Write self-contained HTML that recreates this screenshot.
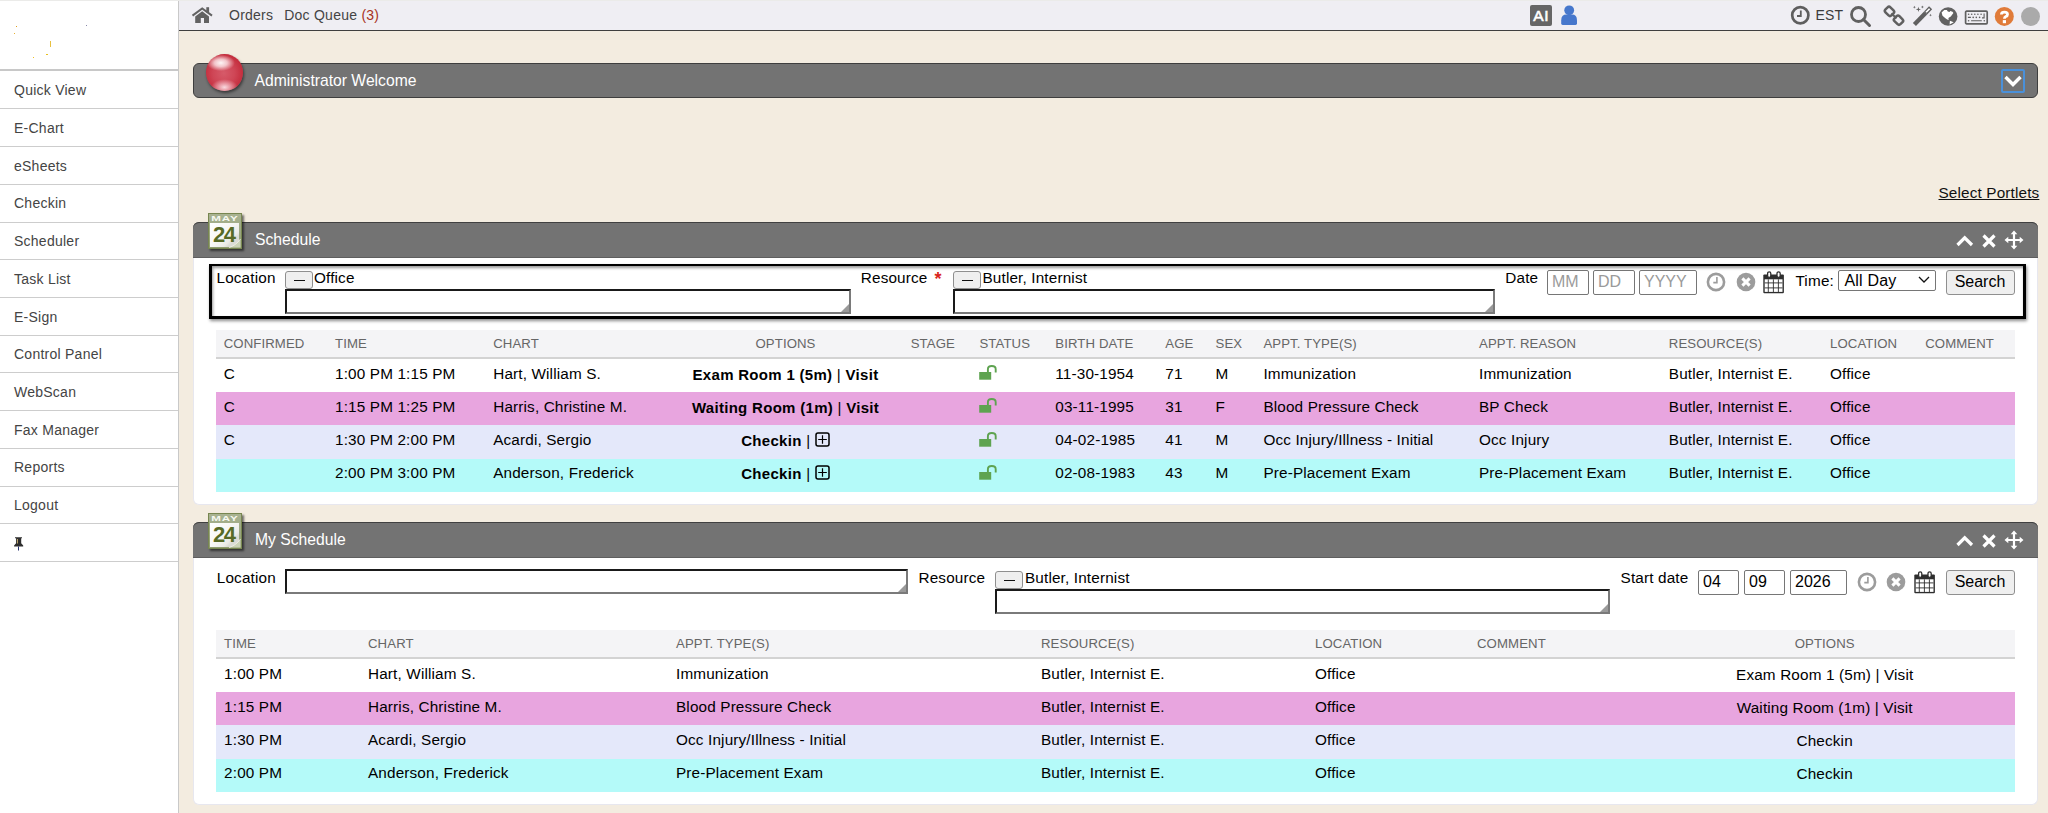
<!DOCTYPE html>
<html><head><meta charset="utf-8"><style>
html,body{margin:0;padding:0;}
body{width:2048px;height:813px;overflow:hidden;position:relative;font-family:"Liberation Sans", sans-serif;background:#f3ece0;}
.a{position:absolute;box-sizing:content-box;}
.t{position:absolute;white-space:nowrap;}
svg.a{overflow:visible;}
</style></head><body>
<div class="a" style="left:0px;top:0px;width:178px;height:813px;background:#fff;"></div>
<div class="a" style="left:178px;top:0px;width:1px;height:813px;background:#c9c9c9;"></div>
<div class="a" style="left:0px;top:69px;width:178px;height:2px;background:#c8c8c8;"></div>
<div class="a" style="left:0px;top:108px;width:178px;height:1px;background:#cdcdcd;"></div>
<div class="t" style="top:81.15px;font-size:14px;line-height:18px;color:#444;letter-spacing:0.25px;left:14px;">Quick View</div>
<div class="a" style="left:0px;top:146px;width:178px;height:1px;background:#cdcdcd;"></div>
<div class="t" style="top:118.95px;font-size:14px;line-height:18px;color:#444;letter-spacing:0.25px;left:14px;">E-Chart</div>
<div class="a" style="left:0px;top:184px;width:178px;height:1px;background:#cdcdcd;"></div>
<div class="t" style="top:156.67px;font-size:14px;line-height:18px;color:#444;letter-spacing:0.25px;left:14px;">eSheets</div>
<div class="a" style="left:0px;top:222px;width:178px;height:1px;background:#cdcdcd;"></div>
<div class="t" style="top:194.39px;font-size:14px;line-height:18px;color:#444;letter-spacing:0.25px;left:14px;">Checkin</div>
<div class="a" style="left:0px;top:259px;width:178px;height:1px;background:#cdcdcd;"></div>
<div class="t" style="top:232.11px;font-size:14px;line-height:18px;color:#444;letter-spacing:0.25px;left:14px;">Scheduler</div>
<div class="a" style="left:0px;top:297px;width:178px;height:1px;background:#cdcdcd;"></div>
<div class="t" style="top:269.83px;font-size:14px;line-height:18px;color:#444;letter-spacing:0.25px;left:14px;">Task List</div>
<div class="a" style="left:0px;top:335px;width:178px;height:1px;background:#cdcdcd;"></div>
<div class="t" style="top:307.55px;font-size:14px;line-height:18px;color:#444;letter-spacing:0.25px;left:14px;">E-Sign</div>
<div class="a" style="left:0px;top:372px;width:178px;height:1px;background:#cdcdcd;"></div>
<div class="t" style="top:345.27px;font-size:14px;line-height:18px;color:#444;letter-spacing:0.25px;left:14px;">Control Panel</div>
<div class="a" style="left:0px;top:410px;width:178px;height:1px;background:#cdcdcd;"></div>
<div class="t" style="top:382.99px;font-size:14px;line-height:18px;color:#444;letter-spacing:0.25px;left:14px;">WebScan</div>
<div class="a" style="left:0px;top:448px;width:178px;height:1px;background:#cdcdcd;"></div>
<div class="t" style="top:420.71px;font-size:14px;line-height:18px;color:#444;letter-spacing:0.25px;left:14px;">Fax Manager</div>
<div class="a" style="left:0px;top:486px;width:178px;height:1px;background:#cdcdcd;"></div>
<div class="t" style="top:458.43px;font-size:14px;line-height:18px;color:#444;letter-spacing:0.25px;left:14px;">Reports</div>
<div class="a" style="left:0px;top:523px;width:178px;height:1px;background:#cdcdcd;"></div>
<div class="t" style="top:496.15px;font-size:14px;line-height:18px;color:#444;letter-spacing:0.25px;left:14px;">Logout</div>
<div class="a" style="left:0px;top:561px;width:178px;height:1px;background:#cdcdcd;"></div>
<svg class="a" style="left:13px;top:537px" width="11" height="14" viewBox="0 0 11 14"><path d="M2 0.2h7v1h-0.8v5l2 2.2v1.2H1.1V8.4l2-2.2v-5H2z" fill="#2e2e2e"/><path d="M4.5 2v4.5" stroke="#c8b070" stroke-width="0.9"/><path d="M5.5 9.5v4" stroke="#283470" stroke-width="1"/></svg>
<div class="a" style="left:15.5px;top:25.5px;width:1.5px;height:1.5px;background:#e0a020;"></div>
<div class="a" style="left:13.8px;top:32.5px;width:1px;height:1px;background:#e8b030;"></div>
<div class="a" style="left:50px;top:41px;width:1px;height:6px;background:#e8c040;"></div>
<div class="a" style="left:46px;top:53.5px;width:1.5px;height:1.5px;background:#e8c020;"></div>
<div class="a" style="left:33px;top:56.5px;width:1px;height:1.2px;background:#f0c020;"></div>
<div class="a" style="left:86px;top:25px;width:1px;height:1px;background:#8888aa;"></div>
<div class="a" style="left:179px;top:0px;width:1869px;height:30px;background:#efeef3;"></div>
<div class="a" style="left:179px;top:30px;width:1869px;height:1px;background:#3f3f3f;"></div>
<svg class="a" style="left:191px;top:6px" width="23" height="18" viewBox="0 0 23 18"><path d="M1.5 9.6 L11.2 2.4 L21 9.6" stroke="#626262" stroke-width="2" fill="none"/><path d="M15.3 1.2h2.8v5.5h-2.8z" fill="#626262"/><path d="M4.2 10.4 L11.2 5.2 L18 10.4 V17 H13 V12 H9.8 V17 H4.2z" fill="#626262"/></svg>
<div class="t" style="top:6.45px;font-size:14px;line-height:18px;color:#444;letter-spacing:0.25px;left:229px;">Orders</div>
<div class="t" style="top:6.45px;font-size:14px;line-height:18px;color:#444;letter-spacing:0.25px;left:284.2px;">Doc Queue <span style="color:#a8321e">(3)</span></div>
<div class="a" style="left:1530px;top:5px;width:22px;height:21px;background:#666;border-radius:2px;"></div>
<div class="t" style="top:6.33px;font-size:15.5px;line-height:20px;color:#fff;letter-spacing:0.5px;left:1041.2px;width:1000px;text-align:center;-webkit-text-stroke:0.6px #fff;">AI</div>
<svg class="a" style="left:1560px;top:5px" width="18" height="21" viewBox="0 0 18 21"><circle cx="9.2" cy="5.3" r="4.9" fill="#4677cc"/><path d="M1.2 18.6 V15.2 Q1.2 9.6 6.4 9.6 H12 Q17 9.6 17 15.2 V18.6 Q17 20 15.6 20 H2.6 Q1.2 20 1.2 18.6z" fill="#4677cc"/></svg>
<svg class="a" style="left:1790px;top:5px" width="21" height="21" viewBox="0 0 21 21"><circle cx="10.3" cy="10.3" r="8.1" stroke="#5e5e5e" stroke-width="2.7" fill="none"/><path d="M10.8 5.4 V11 H7" stroke="#5e5e5e" stroke-width="1.8" fill="none"/></svg>
<div class="t" style="top:6.05px;font-size:14px;line-height:18px;color:#3c3c3c;letter-spacing:0.2px;left:1815.5px;">EST</div>
<svg class="a" style="left:1849px;top:5px" width="23" height="22" viewBox="0 0 23 22"><circle cx="9.5" cy="9.5" r="7" stroke="#606060" stroke-width="2.8" fill="none"/><path d="M14.5 14.5 L20.5 20.5" stroke="#606060" stroke-width="3" stroke-linecap="round"/></svg>
<svg class="a" style="left:1880px;top:0px" width="28" height="30" viewBox="0 0 28 30"><rect x="6" y="7.2" width="7" height="8.4" rx="2" transform="rotate(-45 9.5 11.4)" stroke="#606060" stroke-width="2.5" fill="none"/><rect x="15" y="16" width="7" height="8.4" rx="2" transform="rotate(-45 18.5 20.2)" stroke="#606060" stroke-width="2.5" fill="none"/><path d="M11.3 13.5 L16.6 18.3" stroke="#606060" stroke-width="2"/></svg>
<svg class="a" style="left:1910px;top:0px" width="26" height="30" viewBox="0 0 26 30"><path d="M4.4 24.6 L15.6 13" stroke="#606060" stroke-width="4.3"/><path d="M15.6 13 L20.6 7.8" stroke="#606060" stroke-width="4.3"/><path d="M16.1 12.3 L19.6 8.7" stroke="#fff" stroke-width="1.6"/><path d="M8.4 6.800000000000001 L9.0 8.8 L11.0 9.4 L9.0 10.0 L8.4 12.0 L7.800000000000001 10.0 L5.800000000000001 9.4 L7.800000000000001 8.8z M4.4 5.7 L4.800000000000001 6.8 L5.9 7.2 L4.800000000000001 7.6000000000000005 L4.4 8.7 L4.0 7.6000000000000005 L2.9000000000000004 7.2 L4.0 6.8z M12.4 5.5 L12.8 6.6 L13.9 7 L12.8 7.4 L12.4 8.5 L12.0 7.4 L10.9 7 L12.0 6.6z M20.5 13.799999999999999 L20.9 14.799999999999999 L21.9 15.2 L20.9 15.6 L20.5 16.599999999999998 L20.1 15.6 L19.1 15.2 L20.1 14.799999999999999z" fill="#606060"/></svg>
<svg class="a" style="left:1938px;top:6px" width="21" height="21" viewBox="0 0 21 21"><circle cx="10.1" cy="10.5" r="9.3" fill="#626262"/><path d="M3.6 6.6 L6.3 3.9 L8.9 3.9 L9.8 5.4 L11.6 6 L12.2 5.1 L14.5 5.7 L15.4 6.9 L12.8 10.4 L10.4 11.9 L10.7 13.9 L9.2 13.6 L7.4 12.2 L4.5 9.8z M11.9 14.8 L15.7 16.3 L11.6 18.4z" fill="#fff"/></svg>
<svg class="a" style="left:1964px;top:10px" width="25" height="16" viewBox="0 0 25 16"><rect x="1.6" y="1.2" width="21.6" height="12.6" rx="1" stroke="#606060" stroke-width="1.7" fill="none"/><g fill="#606060"><circle cx="4.6" cy="4.3" r="0.8"/><circle cx="7.7" cy="4.3" r="0.8"/><circle cx="10.8" cy="4.3" r="0.8"/><circle cx="13.9" cy="4.3" r="0.8"/><circle cx="17.1" cy="4.3" r="0.8"/><circle cx="9.2" cy="7.4" r="0.8"/><circle cx="12.3" cy="7.4" r="0.8"/><circle cx="15.6" cy="7.4" r="0.8"/><circle cx="4.6" cy="10.7" r="0.8"/><circle cx="20.3" cy="10.7" r="0.8"/></g><path d="M3.9 7.4 H6.9 M7.1 10.7 H17.8 M20.1 3.5 V7.9 H18" stroke="#606060" stroke-width="1.1" fill="none"/></svg>
<svg class="a" style="left:1994px;top:6px" width="21" height="21" viewBox="0 0 21 21"><circle cx="10.3" cy="10.4" r="9.5" fill="#e07b39"/><path d="M7.4 8.4 Q7.4 6.2 10.4 6.2 Q13.5 6.2 13.5 8.4 Q13.5 9.8 11.8 10.6 Q10.4 11.3 10.4 12.8" stroke="#fff" stroke-width="2.8" fill="none"/><rect x="8.8" y="14.1" width="3.2" height="3.1" fill="#fff"/></svg>
<div class="a" style="left:2021px;top:7px;width:19px;height:19px;background:#aaa;border-radius:50%;"></div>
<div class="a" style="left:179px;top:31px;width:1869px;height:782px;background:#f3ece0;"></div>
<div class="a" style="left:193px;top:63px;width:1843px;height:33.4px;background:#737373;border:1px solid #3e3e3e;border-radius:6px;"></div>
<div class="a" style="left:206px;top:54px;width:36.5px;height:36.5px;border-radius:50%;background:radial-gradient(ellipse 38% 22% at 40% 24%, rgba(255,255,255,.95) 0%, rgba(255,240,242,.75) 45%, rgba(255,255,255,0) 100%), radial-gradient(ellipse 36% 22% at 50% 90%, rgba(255,235,240,.9) 0%, rgba(255,220,228,.5) 50%, rgba(255,255,255,0) 100%), radial-gradient(circle at 48% 52%, #d65a69 0%, #cf4656 40%, #c52f3f 68%, #b01f2c 88%, #8c1620 100%);box-shadow:1px 2px 3px rgba(0,0,0,.5);"></div>
<div class="t" style="top:70.56px;font-size:15.7px;line-height:20px;color:#fff;left:254.6px;">Administrator Welcome</div>
<div class="a" style="left:2001px;top:69px;width:20px;height:20px;border:2px solid #4a90d9;border-radius:2px;"></div>
<svg class="a" style="left:2003px;top:74px" width="20" height="16" viewBox="0 0 20 16"><path d="M2.5 3 L10 10.5 L17.5 3" stroke="#fff" stroke-width="3.4" fill="none"/></svg>
<div class="t" style="top:182.50px;font-size:15.3px;line-height:20px;color:#111;letter-spacing:0.15px;left:1938.5px;"><u>Select Portlets</u></div>
<div class="a" style="left:193px;top:258px;width:1843px;height:245.6px;background:#fff;border:1px solid #e7e7ef;border-top:0;border-radius:0 0 6px 6px;"></div>
<div class="a" style="left:193px;top:222px;width:1845px;height:36px;background:#737373;border-radius:6px 6px 0 0;box-shadow:inset 0 1px 0 #404040, inset 0 -1px 0 #5e5e5e;"></div>
<div class="a" style="left:207.5px;top:213px;width:32px;height:33.5px;background:linear-gradient(#a9b392,#8f9c70);border:1.2px solid #778650;box-shadow:2px 2px 2px rgba(0,0,0,.55);">
<div class="a" style="left:1.6px;top:8.6px;width:29px;height:24px;background:linear-gradient(135deg,#ffffff 0%,#f7f7f5 45%,#ecece8 70%,#dcdcd6 78%);"></div>
<svg class="a" style="left:19px;top:24.5px" width="12.5" height="8.5" viewBox="0 0 12.5 8.5"><path d="M12.5 0 L12.5 8.5 L1 8.5 Q8 6.5 12.5 0z" fill="#ccd3b8"/><path d="M12.5 0 Q8 6.5 1 8.5" stroke="#eef0e6" stroke-width="0.9" fill="none"/></svg>
<div class="a" style="left:0;top:0.6px;width:32px;text-align:center;font-size:8px;line-height:8px;color:#f6f8f0;font-weight:700;letter-spacing:0.6px;transform:scaleX(1.45);">MAY</div>
<div class="a" style="left:0;top:8.8px;width:32px;text-align:center;font-size:22px;line-height:24px;color:#586a26;font-weight:700;letter-spacing:-1.4px;text-indent:-1.4px;">24</div>
</div>
<div class="t" style="top:229.76px;font-size:15.7px;line-height:20px;color:#fff;left:255px;">Schedule</div>
<svg class="a" style="left:1955px;top:234px" width="20" height="14" viewBox="0 0 20 14"><path d="M2.5 11 L9.7 3.8 L17 11" stroke="#fff" stroke-width="3.2" fill="none"/></svg>
<svg class="a" style="left:1981px;top:233px" width="16" height="16" viewBox="0 0 16 16"><path d="M2.5 2.5 L13.5 13.5 M13.5 2.5 L2.5 13.5" stroke="#fff" stroke-width="3.2"/></svg>
<svg class="a" style="left:2004px;top:230px" width="20" height="20" viewBox="0 0 20 20"><path d="M10 2.5 V17.5 M2.5 10 H17.5" stroke="#fff" stroke-width="2.2"/><path d="M10 0.5 L13.3 4.3 H6.7z M10 19.5 L13.3 15.7 H6.7z M0.5 10 L4.3 6.7 V13.3z M19.5 10 L15.7 6.7 V13.3z" fill="#fff"/></svg>
<div class="a" style="left:209px;top:263.6px;width:1811px;height:50.4px;border:3px solid #000;border-top-width:2.6px;box-shadow:1px 2px 3px rgba(0,0,0,.45), inset 1px 2px 3px rgba(0,0,0,.4);"></div>
<div class="t" style="top:268.00px;font-size:15.3px;line-height:20px;color:#000;letter-spacing:0.15px;left:216.5px;">Location</div>
<div class="a" style="left:285px;top:271px;width:26.4px;height:15.8px;background:#efefef;border:1px solid #8f8f8f;border-radius:3px;"></div>
<div class="a" style="left:293.6px;top:279.8px;width:11px;height:1.2px;background:#111;"></div>
<div class="t" style="top:268.00px;font-size:15.3px;line-height:20px;color:#000;letter-spacing:0.15px;left:314px;">Office</div>
<div class="a" style="left:285px;top:289px;width:562px;height:21px;background:#fff;border-style:solid;border-width:2px;border-color:#1a1a1a #7a7a7a #7a7a7a #1a1a1a;"></div>
<svg class="a" style="left:841px;top:304px" width="8" height="8" viewBox="0 0 8 8"><path d="M8 0 V8 H0z" fill="#9a9a9a"/></svg>
<div class="t" style="top:268.00px;font-size:15.3px;line-height:20px;color:#000;letter-spacing:0.15px;left:860.8px;">Resource</div>
<div class="t" style="top:267.76px;font-size:18px;line-height:23px;color:#d9261c;font-weight:700;left:934.5px;">*</div>
<div class="a" style="left:953px;top:271px;width:26.4px;height:15.8px;background:#efefef;border:1px solid #8f8f8f;border-radius:3px;"></div>
<div class="a" style="left:961.6px;top:279.8px;width:11px;height:1.2px;background:#111;"></div>
<div class="t" style="top:268.00px;font-size:15.3px;line-height:20px;color:#000;letter-spacing:0.15px;left:982.5px;">Butler, Internist</div>
<div class="a" style="left:953px;top:289px;width:538px;height:21px;background:#fff;border-style:solid;border-width:2px;border-color:#1a1a1a #7a7a7a #7a7a7a #1a1a1a;"></div>
<svg class="a" style="left:1485px;top:304px" width="8" height="8" viewBox="0 0 8 8"><path d="M8 0 V8 H0z" fill="#9a9a9a"/></svg>
<div class="t" style="top:268.00px;font-size:15.3px;line-height:20px;color:#000;letter-spacing:0.15px;left:1505.3px;">Date</div>
<div class="a" style="left:1547px;top:270px;width:40px;height:23px;background:#fff;border:1px solid #767676;border-radius:2px;"></div>
<div class="t" style="top:271.45px;font-size:16px;line-height:21px;color:#9a9a9a;left:1552px;">MM</div>
<div class="a" style="left:1593px;top:270px;width:40px;height:23px;background:#fff;border:1px solid #767676;border-radius:2px;"></div>
<div class="t" style="top:271.45px;font-size:16px;line-height:21px;color:#9a9a9a;left:1598px;">DD</div>
<div class="a" style="left:1639px;top:270px;width:56px;height:23px;background:#fff;border:1px solid #767676;border-radius:2px;"></div>
<div class="t" style="top:271.45px;font-size:16px;line-height:21px;color:#9a9a9a;left:1644px;">YYYY</div>
<svg class="a" style="left:1706px;top:272px" width="20" height="20" viewBox="0 0 20 20"><circle cx="10" cy="10" r="8.1" stroke="#9c9c9c" stroke-width="2.6" fill="none"/><path d="M10.9 5 V10.6 H7.3" stroke="#9c9c9c" stroke-width="1.6" fill="none"/></svg>
<svg class="a" style="left:1735.5px;top:272px" width="20" height="20" viewBox="0 0 20 20"><circle cx="10" cy="10" r="9.3" fill="#9c9c9c"/><path d="M6.4 6.4 L13.6 13.6 M13.6 6.4 L6.4 13.6" stroke="#fff" stroke-width="3"/></svg>
<svg class="a" style="left:1763px;top:270.5px" width="22" height="23" viewBox="0 0 22 23"><rect x="0.3" y="3.5" width="20.6" height="18.8" rx="1" fill="#2e2e2e"/><rect x="1.7" y="8.3" width="17.8" height="12.6" fill="#fff"/><path d="M5.3 8.3 V21 M10.4 8.3 V21 M15.4 8.3 V21 M1.7 11.9 H19.5 M1.7 16.9 H19.5" stroke="#2e2e2e" stroke-width="0.9"/><rect x="4.6" y="0.8" width="3.2" height="5.6" rx="1.6" stroke="#2e2e2e" stroke-width="1.3" fill="#fff"/><rect x="14" y="0.8" width="3.2" height="5.6" rx="1.6" stroke="#2e2e2e" stroke-width="1.3" fill="#fff"/></svg>
<div class="t" style="top:270.90px;font-size:15.3px;line-height:20px;color:#000;letter-spacing:0.2px;left:1795.4px;">Time:</div>
<div class="a" style="left:1838px;top:270px;width:96px;height:19px;background:#fff;border:1px solid #767676;border-radius:2px;"></div>
<div class="t" style="top:270.45px;font-size:16px;line-height:21px;color:#000;letter-spacing:0.2px;left:1844.4px;">All Day</div>
<svg class="a" style="left:1918px;top:275px" width="12" height="9" viewBox="0 0 12 9"><path d="M1 2 L6 7 L11 2" stroke="#111" stroke-width="1.3" fill="none"/></svg>
<div class="a" style="left:1946px;top:270px;width:67px;height:23px;background:#efefef;border:1px solid #8f8f8f;border-radius:3px;"></div>
<div class="t" style="top:271.35px;font-size:16px;line-height:21px;color:#000;left:1480px;width:1000px;text-align:center;">Search</div>
<div class="a" style="left:216px;top:330px;width:1799px;height:27px;background:#f4f4f6;"></div>
<div class="a" style="left:216px;top:357px;width:1799px;height:2px;background:#d3d3d3;"></div>
<div class="t" style="top:334.92px;font-size:13.2px;line-height:17px;color:#666;letter-spacing:0.1px;left:223.7px;">CONFIRMED</div>
<div class="t" style="top:334.92px;font-size:13.2px;line-height:17px;color:#666;letter-spacing:0.1px;left:335px;">TIME</div>
<div class="t" style="top:334.92px;font-size:13.2px;line-height:17px;color:#666;letter-spacing:0.1px;left:493.2px;">CHART</div>
<div class="t" style="top:334.92px;font-size:13.2px;line-height:17px;color:#666;letter-spacing:0.1px;left:285.5px;width:1000px;text-align:center;">OPTIONS</div>
<div class="t" style="top:334.92px;font-size:13.2px;line-height:17px;color:#666;letter-spacing:0.1px;left:910.7px;">STAGE</div>
<div class="t" style="top:334.92px;font-size:13.2px;line-height:17px;color:#666;letter-spacing:0.1px;left:979.4px;">STATUS</div>
<div class="t" style="top:334.92px;font-size:13.2px;line-height:17px;color:#666;letter-spacing:0.1px;left:1055.3px;">BIRTH DATE</div>
<div class="t" style="top:334.92px;font-size:13.2px;line-height:17px;color:#666;letter-spacing:0.1px;left:1165.3px;">AGE</div>
<div class="t" style="top:334.92px;font-size:13.2px;line-height:17px;color:#666;letter-spacing:0.1px;left:1215.5px;">SEX</div>
<div class="t" style="top:334.92px;font-size:13.2px;line-height:17px;color:#666;letter-spacing:0.1px;left:1263.4px;">APPT. TYPE(S)</div>
<div class="t" style="top:334.92px;font-size:13.2px;line-height:17px;color:#666;letter-spacing:0.1px;left:1479px;">APPT. REASON</div>
<div class="t" style="top:334.92px;font-size:13.2px;line-height:17px;color:#666;letter-spacing:0.1px;left:1668.8px;">RESOURCE(S)</div>
<div class="t" style="top:334.92px;font-size:13.2px;line-height:17px;color:#666;letter-spacing:0.1px;left:1830px;">LOCATION</div>
<div class="t" style="top:334.92px;font-size:13.2px;line-height:17px;color:#666;letter-spacing:0.1px;left:1925.2px;">COMMENT</div>
<div class="a" style="left:216px;top:359px;width:1799px;height:33px;background:#fff;"></div>
<div class="a" style="left:216px;top:392px;width:1799px;height:33px;background:#e8a5df;"></div>
<div class="a" style="left:216px;top:425px;width:1799px;height:34px;background:#e4e8fa;"></div>
<div class="a" style="left:216px;top:459px;width:1799px;height:33px;background:#b4faf9;"></div>
<div class="t" style="top:363.70px;font-size:15.3px;line-height:20px;color:#000;letter-spacing:0.15px;left:223.7px;">C</div>
<div class="t" style="top:363.70px;font-size:15.3px;line-height:20px;color:#000;letter-spacing:0.15px;left:335px;">1:00 PM 1:15 PM</div>
<div class="t" style="top:363.70px;font-size:15.3px;line-height:20px;color:#000;letter-spacing:0.15px;left:493.2px;">Hart, William S.</div>
<div class="t" style="top:364.80px;font-size:15px;line-height:20px;color:#000;font-weight:700;letter-spacing:0.3px;left:285.5px;width:1000px;text-align:center;">Exam Room 1 (5m) <span style="font-weight:400">|</span> Visit</div>
<svg class="a" style="left:979.0px;top:364.20px" width="19" height="17" viewBox="0 0 19 17"><rect x="0.2" y="8" width="12" height="7.7" fill="#5ea350"/><path d="M8.9 8.5 V5.2 Q8.9 2 12.8 2 Q16.7 2 16.7 5.2 V8.6" stroke="#5ea350" stroke-width="1.9" fill="none"/></svg>
<div class="t" style="top:363.70px;font-size:15.3px;line-height:20px;color:#000;letter-spacing:0.15px;left:1055.3px;">11-30-1954</div>
<div class="t" style="top:363.70px;font-size:15.3px;line-height:20px;color:#000;letter-spacing:0.15px;left:1165.3px;">71</div>
<div class="t" style="top:363.70px;font-size:15.3px;line-height:20px;color:#000;letter-spacing:0.15px;left:1215.5px;">M</div>
<div class="t" style="top:363.70px;font-size:15.3px;line-height:20px;color:#000;letter-spacing:0.15px;left:1263.4px;">Immunization</div>
<div class="t" style="top:363.70px;font-size:15.3px;line-height:20px;color:#000;letter-spacing:0.15px;left:1479px;">Immunization</div>
<div class="t" style="top:363.70px;font-size:15.3px;line-height:20px;color:#000;letter-spacing:0.15px;left:1668.8px;">Butler, Internist E.</div>
<div class="t" style="top:363.70px;font-size:15.3px;line-height:20px;color:#000;letter-spacing:0.15px;left:1830px;">Office</div>
<div class="t" style="top:396.90px;font-size:15.3px;line-height:20px;color:#000;letter-spacing:0.15px;left:223.7px;">C</div>
<div class="t" style="top:396.90px;font-size:15.3px;line-height:20px;color:#000;letter-spacing:0.15px;left:335px;">1:15 PM 1:25 PM</div>
<div class="t" style="top:396.90px;font-size:15.3px;line-height:20px;color:#000;letter-spacing:0.15px;left:493.2px;">Harris, Christine M.</div>
<div class="t" style="top:398.00px;font-size:15px;line-height:20px;color:#000;font-weight:700;letter-spacing:0.3px;left:285.5px;width:1000px;text-align:center;">Waiting Room (1m) <span style="font-weight:400">|</span> Visit</div>
<svg class="a" style="left:979.0px;top:397.40px" width="19" height="17" viewBox="0 0 19 17"><rect x="0.2" y="8" width="12" height="7.7" fill="#5ea350"/><path d="M8.9 8.5 V5.2 Q8.9 2 12.8 2 Q16.7 2 16.7 5.2 V8.6" stroke="#5ea350" stroke-width="1.9" fill="none"/></svg>
<div class="t" style="top:396.90px;font-size:15.3px;line-height:20px;color:#000;letter-spacing:0.15px;left:1055.3px;">03-11-1995</div>
<div class="t" style="top:396.90px;font-size:15.3px;line-height:20px;color:#000;letter-spacing:0.15px;left:1165.3px;">31</div>
<div class="t" style="top:396.90px;font-size:15.3px;line-height:20px;color:#000;letter-spacing:0.15px;left:1215.5px;">F</div>
<div class="t" style="top:396.90px;font-size:15.3px;line-height:20px;color:#000;letter-spacing:0.15px;left:1263.4px;">Blood Pressure Check</div>
<div class="t" style="top:396.90px;font-size:15.3px;line-height:20px;color:#000;letter-spacing:0.15px;left:1479px;">BP Check</div>
<div class="t" style="top:396.90px;font-size:15.3px;line-height:20px;color:#000;letter-spacing:0.15px;left:1668.8px;">Butler, Internist E.</div>
<div class="t" style="top:396.90px;font-size:15.3px;line-height:20px;color:#000;letter-spacing:0.15px;left:1830px;">Office</div>
<div class="t" style="top:430.10px;font-size:15.3px;line-height:20px;color:#000;letter-spacing:0.15px;left:223.7px;">C</div>
<div class="t" style="top:430.10px;font-size:15.3px;line-height:20px;color:#000;letter-spacing:0.15px;left:335px;">1:30 PM 2:00 PM</div>
<div class="t" style="top:430.10px;font-size:15.3px;line-height:20px;color:#000;letter-spacing:0.15px;left:493.2px;">Acardi, Sergio</div>
<div class="t" style="top:431.20px;font-size:15px;line-height:20px;color:#000;font-weight:700;letter-spacing:0.3px;left:285.5px;width:1000px;text-align:center;">Checkin <span style="font-weight:400">|</span> <svg width="15" height="15" viewBox="0 0 15 15" style="vertical-align:-1px"><rect x="1" y="1" width="13" height="13" rx="2" stroke="#000" stroke-width="1.5" fill="none"/><path d="M7.5 3.2 V11.8 M3.2 7.5 H11.8" stroke="#000" stroke-width="1.2"/></svg></div>
<svg class="a" style="left:979.0px;top:430.60px" width="19" height="17" viewBox="0 0 19 17"><rect x="0.2" y="8" width="12" height="7.7" fill="#5ea350"/><path d="M8.9 8.5 V5.2 Q8.9 2 12.8 2 Q16.7 2 16.7 5.2 V8.6" stroke="#5ea350" stroke-width="1.9" fill="none"/></svg>
<div class="t" style="top:430.10px;font-size:15.3px;line-height:20px;color:#000;letter-spacing:0.15px;left:1055.3px;">04-02-1985</div>
<div class="t" style="top:430.10px;font-size:15.3px;line-height:20px;color:#000;letter-spacing:0.15px;left:1165.3px;">41</div>
<div class="t" style="top:430.10px;font-size:15.3px;line-height:20px;color:#000;letter-spacing:0.15px;left:1215.5px;">M</div>
<div class="t" style="top:430.10px;font-size:15.3px;line-height:20px;color:#000;letter-spacing:0.15px;left:1263.4px;">Occ Injury/Illness - Initial</div>
<div class="t" style="top:430.10px;font-size:15.3px;line-height:20px;color:#000;letter-spacing:0.15px;left:1479px;">Occ Injury</div>
<div class="t" style="top:430.10px;font-size:15.3px;line-height:20px;color:#000;letter-spacing:0.15px;left:1668.8px;">Butler, Internist E.</div>
<div class="t" style="top:430.10px;font-size:15.3px;line-height:20px;color:#000;letter-spacing:0.15px;left:1830px;">Office</div>
<div class="t" style="top:463.30px;font-size:15.3px;line-height:20px;color:#000;letter-spacing:0.15px;left:335px;">2:00 PM 3:00 PM</div>
<div class="t" style="top:463.30px;font-size:15.3px;line-height:20px;color:#000;letter-spacing:0.15px;left:493.2px;">Anderson, Frederick</div>
<div class="t" style="top:464.40px;font-size:15px;line-height:20px;color:#000;font-weight:700;letter-spacing:0.3px;left:285.5px;width:1000px;text-align:center;">Checkin <span style="font-weight:400">|</span> <svg width="15" height="15" viewBox="0 0 15 15" style="vertical-align:-1px"><rect x="1" y="1" width="13" height="13" rx="2" stroke="#000" stroke-width="1.5" fill="none"/><path d="M7.5 3.2 V11.8 M3.2 7.5 H11.8" stroke="#000" stroke-width="1.2"/></svg></div>
<svg class="a" style="left:979.0px;top:463.80px" width="19" height="17" viewBox="0 0 19 17"><rect x="0.2" y="8" width="12" height="7.7" fill="#5ea350"/><path d="M8.9 8.5 V5.2 Q8.9 2 12.8 2 Q16.7 2 16.7 5.2 V8.6" stroke="#5ea350" stroke-width="1.9" fill="none"/></svg>
<div class="t" style="top:463.30px;font-size:15.3px;line-height:20px;color:#000;letter-spacing:0.15px;left:1055.3px;">02-08-1983</div>
<div class="t" style="top:463.30px;font-size:15.3px;line-height:20px;color:#000;letter-spacing:0.15px;left:1165.3px;">43</div>
<div class="t" style="top:463.30px;font-size:15.3px;line-height:20px;color:#000;letter-spacing:0.15px;left:1215.5px;">M</div>
<div class="t" style="top:463.30px;font-size:15.3px;line-height:20px;color:#000;letter-spacing:0.15px;left:1263.4px;">Pre-Placement Exam</div>
<div class="t" style="top:463.30px;font-size:15.3px;line-height:20px;color:#000;letter-spacing:0.15px;left:1479px;">Pre-Placement Exam</div>
<div class="t" style="top:463.30px;font-size:15.3px;line-height:20px;color:#000;letter-spacing:0.15px;left:1668.8px;">Butler, Internist E.</div>
<div class="t" style="top:463.30px;font-size:15.3px;line-height:20px;color:#000;letter-spacing:0.15px;left:1830px;">Office</div>
<div class="a" style="left:193px;top:558px;width:1843px;height:245.8px;background:#fff;border:1px solid #e7e7ef;border-top:0;border-radius:0 0 6px 6px;"></div>
<div class="a" style="left:193px;top:522px;width:1845px;height:36px;background:#737373;border-radius:6px 6px 0 0;box-shadow:inset 0 1px 0 #404040, inset 0 -1px 0 #5e5e5e;"></div>
<div class="a" style="left:207.5px;top:513px;width:32px;height:33.5px;background:linear-gradient(#a9b392,#8f9c70);border:1.2px solid #778650;box-shadow:2px 2px 2px rgba(0,0,0,.55);">
<div class="a" style="left:1.6px;top:8.6px;width:29px;height:24px;background:linear-gradient(135deg,#ffffff 0%,#f7f7f5 45%,#ecece8 70%,#dcdcd6 78%);"></div>
<svg class="a" style="left:19px;top:24.5px" width="12.5" height="8.5" viewBox="0 0 12.5 8.5"><path d="M12.5 0 L12.5 8.5 L1 8.5 Q8 6.5 12.5 0z" fill="#ccd3b8"/><path d="M12.5 0 Q8 6.5 1 8.5" stroke="#eef0e6" stroke-width="0.9" fill="none"/></svg>
<div class="a" style="left:0;top:0.6px;width:32px;text-align:center;font-size:8px;line-height:8px;color:#f6f8f0;font-weight:700;letter-spacing:0.6px;transform:scaleX(1.45);">MAY</div>
<div class="a" style="left:0;top:8.8px;width:32px;text-align:center;font-size:22px;line-height:24px;color:#586a26;font-weight:700;letter-spacing:-1.4px;text-indent:-1.4px;">24</div>
</div>
<div class="t" style="top:529.76px;font-size:15.7px;line-height:20px;color:#fff;left:255px;">My Schedule</div>
<svg class="a" style="left:1955px;top:534px" width="20" height="14" viewBox="0 0 20 14"><path d="M2.5 11 L9.7 3.8 L17 11" stroke="#fff" stroke-width="3.2" fill="none"/></svg>
<svg class="a" style="left:1981px;top:533px" width="16" height="16" viewBox="0 0 16 16"><path d="M2.5 2.5 L13.5 13.5 M13.5 2.5 L2.5 13.5" stroke="#fff" stroke-width="3.2"/></svg>
<svg class="a" style="left:2004px;top:530px" width="20" height="20" viewBox="0 0 20 20"><path d="M10 2.5 V17.5 M2.5 10 H17.5" stroke="#fff" stroke-width="2.2"/><path d="M10 0.5 L13.3 4.3 H6.7z M10 19.5 L13.3 15.7 H6.7z M0.5 10 L4.3 6.7 V13.3z M19.5 10 L15.7 6.7 V13.3z" fill="#fff"/></svg>
<div class="t" style="top:568.00px;font-size:15.3px;line-height:20px;color:#000;letter-spacing:0.15px;left:216.8px;">Location</div>
<div class="a" style="left:285px;top:569px;width:619px;height:21px;background:#fff;border-style:solid;border-width:2px;border-color:#1a1a1a #7a7a7a #7a7a7a #1a1a1a;"></div>
<svg class="a" style="left:898px;top:584px" width="8" height="8" viewBox="0 0 8 8"><path d="M8 0 V8 H0z" fill="#9a9a9a"/></svg>
<div class="t" style="top:568.00px;font-size:15.3px;line-height:20px;color:#000;letter-spacing:0.15px;left:918.5px;">Resource</div>
<div class="a" style="left:995px;top:571px;width:26.4px;height:15.8px;background:#efefef;border:1px solid #8f8f8f;border-radius:3px;"></div>
<div class="a" style="left:1003.6px;top:579.8px;width:11px;height:1.2px;background:#111;"></div>
<div class="t" style="top:568.00px;font-size:15.3px;line-height:20px;color:#000;letter-spacing:0.15px;left:1025px;">Butler, Internist</div>
<div class="a" style="left:995px;top:589px;width:611px;height:21px;background:#fff;border-style:solid;border-width:2px;border-color:#1a1a1a #7a7a7a #7a7a7a #1a1a1a;"></div>
<svg class="a" style="left:1600px;top:604px" width="8" height="8" viewBox="0 0 8 8"><path d="M8 0 V8 H0z" fill="#9a9a9a"/></svg>
<div class="t" style="top:567.80px;font-size:15.3px;line-height:20px;color:#000;letter-spacing:0.15px;left:1620.6px;">Start date</div>
<div class="a" style="left:1698px;top:570px;width:39px;height:23px;background:#fff;border:1px solid #767676;border-radius:2px;"></div>
<div class="t" style="top:571.45px;font-size:16px;line-height:21px;color:#000;left:1703px;">04</div>
<div class="a" style="left:1744px;top:570px;width:39px;height:23px;background:#fff;border:1px solid #767676;border-radius:2px;"></div>
<div class="t" style="top:571.45px;font-size:16px;line-height:21px;color:#000;left:1749px;">09</div>
<div class="a" style="left:1790px;top:570px;width:55px;height:23px;background:#fff;border:1px solid #767676;border-radius:2px;"></div>
<div class="t" style="top:571.45px;font-size:16px;line-height:21px;color:#000;left:1795px;">2026</div>
<svg class="a" style="left:1857px;top:572px" width="20" height="20" viewBox="0 0 20 20"><circle cx="10" cy="10" r="8.1" stroke="#9c9c9c" stroke-width="2.6" fill="none"/><path d="M10.9 5 V10.6 H7.3" stroke="#9c9c9c" stroke-width="1.6" fill="none"/></svg>
<svg class="a" style="left:1885.5px;top:572px" width="20" height="20" viewBox="0 0 20 20"><circle cx="10" cy="10" r="9.3" fill="#9c9c9c"/><path d="M6.4 6.4 L13.6 13.6 M13.6 6.4 L6.4 13.6" stroke="#fff" stroke-width="3"/></svg>
<svg class="a" style="left:1913.5px;top:570.5px" width="22" height="23" viewBox="0 0 22 23"><rect x="0.3" y="3.5" width="20.6" height="18.8" rx="1" fill="#2e2e2e"/><rect x="1.7" y="8.3" width="17.8" height="12.6" fill="#fff"/><path d="M5.3 8.3 V21 M10.4 8.3 V21 M15.4 8.3 V21 M1.7 11.9 H19.5 M1.7 16.9 H19.5" stroke="#2e2e2e" stroke-width="0.9"/><rect x="4.6" y="0.8" width="3.2" height="5.6" rx="1.6" stroke="#2e2e2e" stroke-width="1.3" fill="#fff"/><rect x="14" y="0.8" width="3.2" height="5.6" rx="1.6" stroke="#2e2e2e" stroke-width="1.3" fill="#fff"/></svg>
<div class="a" style="left:1946px;top:569.5px;width:67px;height:23px;background:#efefef;border:1px solid #8f8f8f;border-radius:3px;"></div>
<div class="t" style="top:570.85px;font-size:16px;line-height:21px;color:#000;left:1480px;width:1000px;text-align:center;">Search</div>
<div class="a" style="left:216px;top:630px;width:1799px;height:27px;background:#f4f4f6;"></div>
<div class="a" style="left:216px;top:657px;width:1799px;height:2px;background:#d3d3d3;"></div>
<div class="t" style="top:634.92px;font-size:13.2px;line-height:17px;color:#666;letter-spacing:0.1px;left:224.1px;">TIME</div>
<div class="t" style="top:634.92px;font-size:13.2px;line-height:17px;color:#666;letter-spacing:0.1px;left:368px;">CHART</div>
<div class="t" style="top:634.92px;font-size:13.2px;line-height:17px;color:#666;letter-spacing:0.1px;left:676px;">APPT. TYPE(S)</div>
<div class="t" style="top:634.92px;font-size:13.2px;line-height:17px;color:#666;letter-spacing:0.1px;left:1041px;">RESOURCE(S)</div>
<div class="t" style="top:634.92px;font-size:13.2px;line-height:17px;color:#666;letter-spacing:0.1px;left:1315px;">LOCATION</div>
<div class="t" style="top:634.92px;font-size:13.2px;line-height:17px;color:#666;letter-spacing:0.1px;left:1477px;">COMMENT</div>
<div class="t" style="top:634.92px;font-size:13.2px;line-height:17px;color:#666;letter-spacing:0.1px;left:1324.7px;width:1000px;text-align:center;">OPTIONS</div>
<div class="a" style="left:216px;top:659px;width:1799px;height:33px;background:#fff;"></div>
<div class="a" style="left:216px;top:692px;width:1799px;height:33px;background:#e8a5df;"></div>
<div class="a" style="left:216px;top:725px;width:1799px;height:34px;background:#e4e8fa;"></div>
<div class="a" style="left:216px;top:759px;width:1799px;height:33px;background:#b4faf9;"></div>
<div class="t" style="top:663.70px;font-size:15.3px;line-height:20px;color:#000;letter-spacing:0.15px;left:224.1px;">1:00 PM</div>
<div class="t" style="top:663.70px;font-size:15.3px;line-height:20px;color:#000;letter-spacing:0.15px;left:368px;">Hart, William S.</div>
<div class="t" style="top:663.70px;font-size:15.3px;line-height:20px;color:#000;letter-spacing:0.15px;left:676px;">Immunization</div>
<div class="t" style="top:663.70px;font-size:15.3px;line-height:20px;color:#000;letter-spacing:0.15px;left:1041px;">Butler, Internist E.</div>
<div class="t" style="top:663.70px;font-size:15.3px;line-height:20px;color:#000;letter-spacing:0.15px;left:1315px;">Office</div>
<div class="t" style="top:664.70px;font-size:15.3px;line-height:20px;color:#000;letter-spacing:0.15px;left:1324.7px;width:1000px;text-align:center;">Exam Room 1 (5m) | Visit</div>
<div class="t" style="top:696.90px;font-size:15.3px;line-height:20px;color:#000;letter-spacing:0.15px;left:224.1px;">1:15 PM</div>
<div class="t" style="top:696.90px;font-size:15.3px;line-height:20px;color:#000;letter-spacing:0.15px;left:368px;">Harris, Christine M.</div>
<div class="t" style="top:696.90px;font-size:15.3px;line-height:20px;color:#000;letter-spacing:0.15px;left:676px;">Blood Pressure Check</div>
<div class="t" style="top:696.90px;font-size:15.3px;line-height:20px;color:#000;letter-spacing:0.15px;left:1041px;">Butler, Internist E.</div>
<div class="t" style="top:696.90px;font-size:15.3px;line-height:20px;color:#000;letter-spacing:0.15px;left:1315px;">Office</div>
<div class="t" style="top:697.90px;font-size:15.3px;line-height:20px;color:#000;letter-spacing:0.15px;left:1324.7px;width:1000px;text-align:center;">Waiting Room (1m) | Visit</div>
<div class="t" style="top:730.10px;font-size:15.3px;line-height:20px;color:#000;letter-spacing:0.15px;left:224.1px;">1:30 PM</div>
<div class="t" style="top:730.10px;font-size:15.3px;line-height:20px;color:#000;letter-spacing:0.15px;left:368px;">Acardi, Sergio</div>
<div class="t" style="top:730.10px;font-size:15.3px;line-height:20px;color:#000;letter-spacing:0.15px;left:676px;">Occ Injury/Illness - Initial</div>
<div class="t" style="top:730.10px;font-size:15.3px;line-height:20px;color:#000;letter-spacing:0.15px;left:1041px;">Butler, Internist E.</div>
<div class="t" style="top:730.10px;font-size:15.3px;line-height:20px;color:#000;letter-spacing:0.15px;left:1315px;">Office</div>
<div class="t" style="top:731.10px;font-size:15.3px;line-height:20px;color:#000;letter-spacing:0.15px;left:1324.7px;width:1000px;text-align:center;">Checkin</div>
<div class="t" style="top:763.30px;font-size:15.3px;line-height:20px;color:#000;letter-spacing:0.15px;left:224.1px;">2:00 PM</div>
<div class="t" style="top:763.30px;font-size:15.3px;line-height:20px;color:#000;letter-spacing:0.15px;left:368px;">Anderson, Frederick</div>
<div class="t" style="top:763.30px;font-size:15.3px;line-height:20px;color:#000;letter-spacing:0.15px;left:676px;">Pre-Placement Exam</div>
<div class="t" style="top:763.30px;font-size:15.3px;line-height:20px;color:#000;letter-spacing:0.15px;left:1041px;">Butler, Internist E.</div>
<div class="t" style="top:763.30px;font-size:15.3px;line-height:20px;color:#000;letter-spacing:0.15px;left:1315px;">Office</div>
<div class="t" style="top:764.30px;font-size:15.3px;line-height:20px;color:#000;letter-spacing:0.15px;left:1324.7px;width:1000px;text-align:center;">Checkin</div>
<div class="a" style="left:0px;top:0px;width:2048px;height:1px;background:#ebebe9;"></div>
</body></html>
